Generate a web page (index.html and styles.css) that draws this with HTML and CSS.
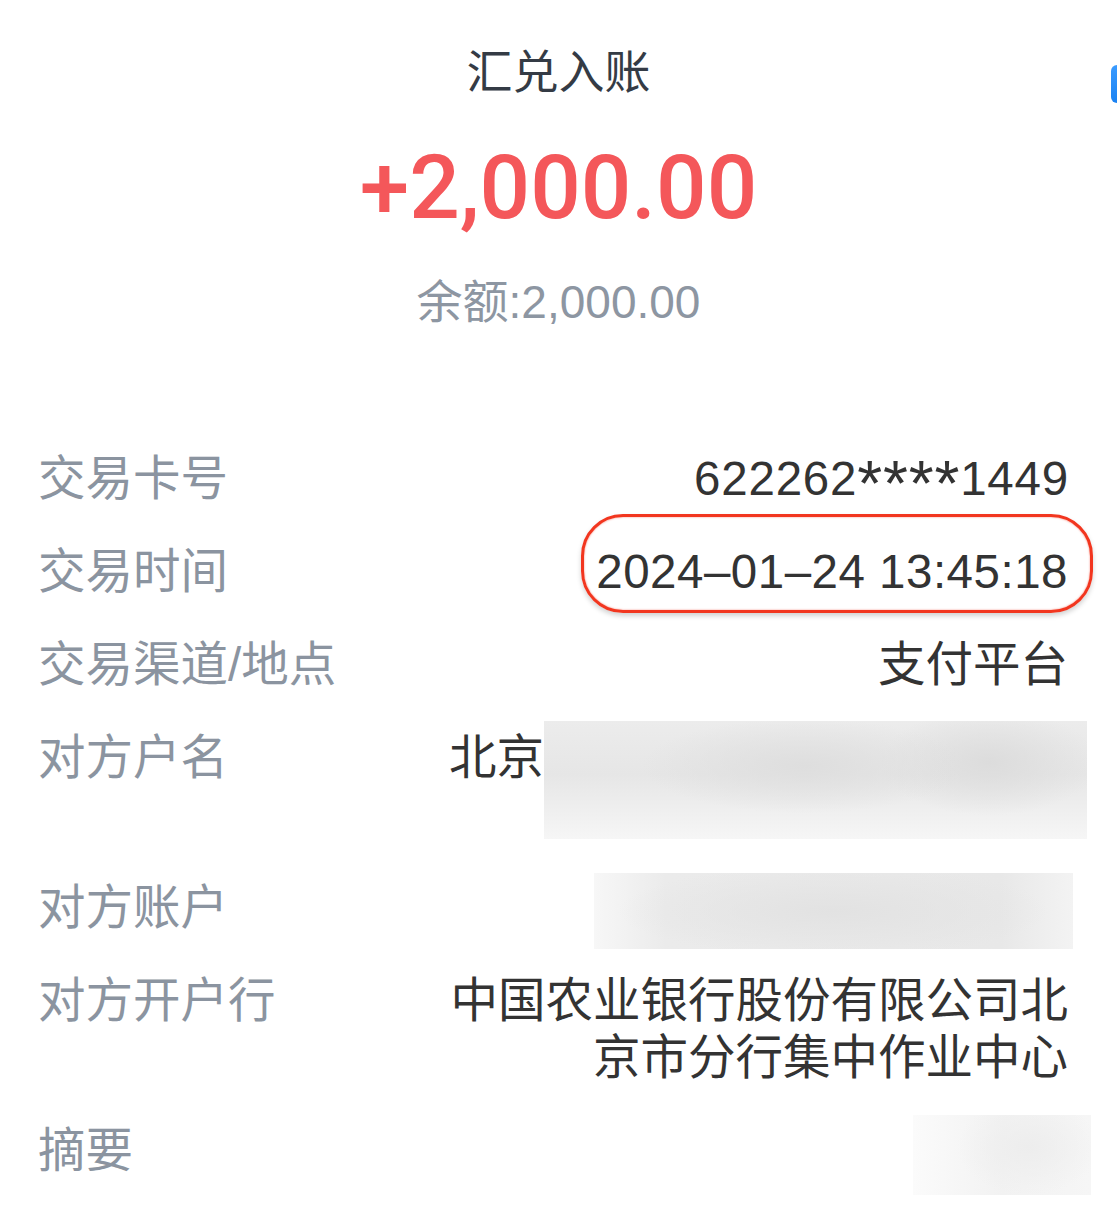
FILE: index.html
```html
<!DOCTYPE html>
<html lang="zh-CN">

<head>
  <meta charset="utf-8">
  <title>汇兑入账</title>
  <link rel="stylesheet" href="styles.css">
</head>

<body>
  <div class="side-tab"></div>
  <main class="receipt">
    <header class="summary">
      <h1 class="title">汇兑入账</h1>
      <div class="amount">+2,000.00</div>
      <div class="balance">余额:2,000.00</div>
    </header>
    <dl class="details">
      <div class="row">
        <dt>交易卡号</dt>
        <dd><span class="card-no">622262<span class="mask">****</span>1449</span></dd>
      </div>
      <div class="row">
        <dt>交易时间</dt>
        <dd><span class="circled">2024–01–24 13:45:18</span></dd>
      </div>
      <div class="row">
        <dt>交易渠道/地点</dt>
        <dd>支付平台</dd>
      </div>
      <div class="row">
        <dt>对方户名</dt>
        <dd class="left"><span class="name">北京</span><span class="redact redact-name"></span></dd>
      </div>
      <div class="row">
        <dt>对方账户</dt>
        <dd><span class="redact redact-account"></span></dd>
      </div>
      <div class="row">
        <dt>对方开户行</dt>
        <dd>中国农业银行股份有限公司北<br>京市分行集中作业中心</dd>
      </div>
      <div class="row">
        <dt>摘要</dt>
        <dd><span class="redact redact-note"></span></dd>
      </div>
    </dl>
  </main>
</body>

</html>
```

FILE: styles.css
```css
* {
  box-sizing: border-box;
}

body {
  margin: 0;
  background: #ffffff;
  font-family: "Liberation Sans", "Noto Sans CJK SC", sans-serif;
  overflow: hidden;
}

.side-tab {
  position: absolute;
  top: 65px;
  right: 0;
  width: 6px;
  height: 38px;
  border-radius: 8px 0 0 8px;
  background: linear-gradient(#3a9bff, #1a82f2);
}

.receipt {
  padding: 42px 49px 0 38px;
}

.summary {
  text-align: center;
  padding-left: 11px;
}

.title {
  margin: 0;
  font-size: 46px;
  line-height: 60px;
  font-weight: normal;
  color: #343b45;
}

.amount {
  margin-top: 31px;
  font-family: Roboto, "Liberation Sans", sans-serif;
  font-size: 89px;
  line-height: 110px;
  font-weight: 500;
  color: #f4575a;
}

.balance {
  margin-top: 29px;
  font-size: 46px;
  line-height: 60px;
  color: #8d96a2;
}

.details {
  margin: 100px 0 0;
}

.row {
  display: grid;
  grid-template-columns: 411px 1fr;
  padding: 18px 0;
  font-size: 47.5px;
  line-height: 57px;
}

.row dt {
  color: #8b94a0;
  white-space: nowrap;
}

.row dd {
  margin: 0;
  display: flex;
  justify-content: flex-end;
  align-items: flex-start;
  text-align: right;
  color: #333333;
}

.row dd.left {
  justify-content: flex-start;
}

.card-no {
  letter-spacing: 0.8px;
  margin-right: -1px;
}

.mask {
  font-size: 64px;
  line-height: 0;
  position: relative;
  top: 11px;
}

.circled {
  position: relative;
  letter-spacing: 0.5px;
}

.circled::after {
  content: "";
  position: absolute;
  top: -29px;
  right: -25px;
  bottom: -13px;
  left: -15px;
  border: 3px solid #f2361f;
  border-radius: 42px;
  box-shadow: 0 3px 5px rgba(0, 0, 0, 0.18), inset 0 0 2px rgba(242, 54, 31, 0.6);
}

.name {
  flex-shrink: 0;
  white-space: nowrap;
}

.redact {
  display: block;
  flex-shrink: 0;
}

.redact-name {
  width: 543px;
  height: 118px;
  margin: -8px -25px 4px 0;
  background:
    radial-gradient(ellipse 30% 40% at 48% 38%, #dedede, rgba(222, 222, 222, 0)),
    radial-gradient(ellipse 20% 45% at 82% 35%, #dcdcdc, rgba(220, 220, 220, 0)),
    linear-gradient(#ececec, #e6e6e6 45%, #f6f6f6);
}

.redact-account {
  width: 479px;
  height: 76px;
  margin: -6px -5px -13px 0;
  background:
    radial-gradient(ellipse 45% 60% at 50% 50%, #e2e2e2, rgba(226, 226, 226, 0)),
    linear-gradient(90deg, #f7f7f7, #ebebeb 15%, #e8e8e8 85%, #f3f3f3);
}

.redact-note {
  width: 178px;
  height: 80px;
  margin: -7px -23px -16px 0;
  background:
    radial-gradient(ellipse 40% 60% at 65% 40%, #ededed, rgba(237, 237, 237, 0)),
    linear-gradient(90deg, #fbfbfb, #f2f2f2 50%, #f6f6f6);
}
```
